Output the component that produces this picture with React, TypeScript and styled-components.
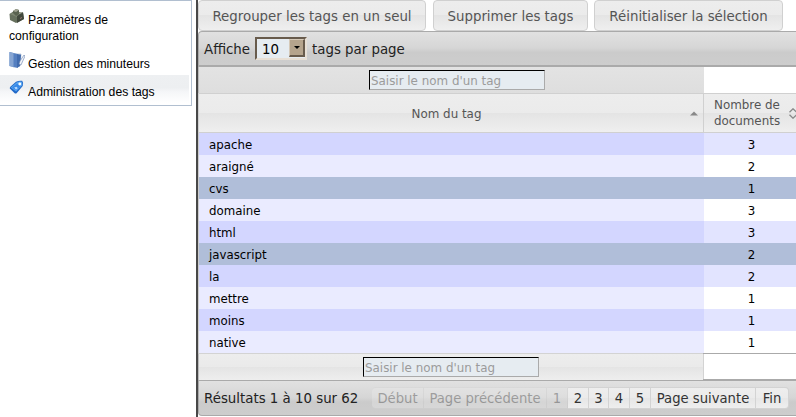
import React from "react";
import styled, { createGlobalStyle } from "styled-components";

const GlobalStyle = createGlobalStyle`
  * { box-sizing: border-box; }
  body { margin: 0; background: #fff; overflow: hidden; }
`;

const Page = styled.div`
  display: flex;
  align-items: flex-start;
  width: 796px;
  height: 417px;
  overflow: hidden;
  font-family: "DejaVu Sans", Verdana, sans-serif;
  color: #222;
`;

const Sidebar = styled.nav`
  width: 192px;
  height: 106px;
  margin-right: 4px;
  padding: 6px 2px 2px 0;
  border: 1px solid #b1bfd0;
  border-left: 0;
  flex: none;
  font: 12.2px/16px "Liberation Sans", Arial, sans-serif;
  color: #000;
`;

const MenuItem = styled.div<{ $tall?: boolean; $active?: boolean }>`
  height: ${(p) => (p.$tall ? 40 : 28)}px;
  padding: ${(p) => (p.$tall ? 3 : 7)}px 0 0 9px;
  white-space: nowrap;
  background: ${(p) => (p.$active ? "linear-gradient(#eef0f2 0, #edeff1 45%, #f5f6f8 60%, #fff 100%)" : "none")};
  svg { width: 16px; height: 16px; margin: -2px 3px 0 0; vertical-align: 0; }
`;

const Main = styled.main`
  width: 600px;
  height: 417px;
  flex: none;
  overflow: hidden;
  border-left: 2px solid #484848;
`;

const Actions = styled.div`
  display: flex;
  height: 31px;
`;

const ActionButton = styled.button<{ $width: number; $gap?: number }>`
  width: ${(p) => p.$width}px;
  height: 31px;
  margin: 0 ${(p) => p.$gap ?? 0}px 0 0;
  padding: 2px 0 0;
  flex: none;
  border: 1px solid #d0d0d0;
  border-radius: 4px;
  background: linear-gradient(#ededed 0, #ebebeb 49%, #e4e4e4 50%, #efefef 100%);
  color: #555;
  font: 13.35px/19px "DejaVu Sans", sans-serif;
  white-space: nowrap;
`;

const Bar = styled.div<{ $foot?: boolean }>`
  display: flex;
  align-items: center;
  height: 36px;
  padding-left: 5px;
  border: solid #aaa;
  border-width: ${(p) => (p.$foot ? "1px 0 1px 1px" : "1px 0 2px 1px")};
  border-radius: ${(p) => (p.$foot ? "0 0 0 4px" : "4px 0 0 0")};
  background: linear-gradient(#e1e1e1 0, #d6d6d6 48%, #cbcbcb 62%, #cdcdcd 100%);
  font-size: 13.35px;
  line-height: 18px;
  white-space: nowrap;
`;

const BarText = styled.span<{ $width: number }>`
  width: ${(p) => p.$width}px;
  padding-top: 2px;
  flex: none;
`;

const Select = styled.div`
  display: flex;
  justify-content: space-between;
  width: 52px;
  height: 23px;
  margin-right: 5px;
  padding-left: 5px;
  border: 2px solid;
  border-color: #685b4c #e7dfd5 #e7dfd5 #685b4c;
  background: #e6ecf1;
  color: #000;
  line-height: 21px;
`;

const Arrow = styled.span`
  display: flex;
  align-items: center;
  justify-content: center;
  width: 16px;
  height: 18px;
  border: 1px solid;
  border-color: #d5c9b8 #685b4c #685b4c #d5c9b8;
  border-right-width: 2px;
  border-bottom-width: 2px;
  background: #b5a48d;
`;

const Grid = styled.div<{ $height: number; $first?: number }>`
  display: grid;
  grid-template-columns: ${(p) => p.$first ?? 505}px 1fr;
  height: ${(p) => p.$height}px;
  font-size: 11.9px;
`;

const FilterCell = styled.div<{ $foot?: boolean }>`
  display: flex;
  align-items: flex-start;
  justify-content: center;
  padding: ${(p) => (p.$foot ? "3px 0 0 0" : "3px 0 0 11px")};
  border-left: 1px solid #bbb;
  border-top: ${(p) => (p.$foot ? "1px solid #d3d3d3" : "0")};
  background: ${(p) =>
    p.$foot
      ? "linear-gradient(#ededed 0, #eaeaea 49%, #e4e4e4 50%, #eeeeee 100%)"
      : "linear-gradient(#e3e3e3, #dedede)"};
`;

const EmptyCell = styled.div<{ $foot?: boolean }>`
  border: solid ${(p) => (p.$foot ? "#aaa" : "transparent")};
  border-width: ${(p) => (p.$foot ? "1px 0" : "0")};
  box-shadow: ${(p) => (p.$foot ? "inset 1px 0 #d3d3d3" : "none")};
`;

const Filter = styled.input`
  width: 176px;
  height: 20px;
  margin: 0;
  padding: 1px 1px 0;
  border: 1px solid;
  border-color: #000 #aaa #aaa #000;
  border-radius: 0;
  background: #e6ecf1;
  font: 11.9px/16px "DejaVu Sans", sans-serif;
  &::placeholder { color: #9b9b9b; opacity: 1; }
`;

const Heading = styled.div<{ $count?: boolean }>`
  display: grid;
  grid-template-columns: ${(p) => (p.$count ? "1fr 7px" : "1fr 8px")};
  align-items: center;
  padding: ${(p) => (p.$count ? "0 0 0 1px" : "1px 5px 0 4px")};
  border: solid #d0d0d0;
  border-width: 1px 0 1px 1px;
  background: linear-gradient(#ededed 0, #ebebeb 49%, #e4e4e4 50%, #efefef 100%);
  color: #555;
  text-align: center;
  line-height: 16px;
`;

const Row = styled.div<{ $tone: "odd" | "even" | "selected" }>`
  display: grid;
  grid-template-columns: 505px 95px;
  height: 22px;
  border-left: 1px solid #ccc;
  color: #000;
  font-size: 11.8px;
  line-height: 20px;
  background: ${(p) => ({ odd: "#d3d6ff", even: "#eaebff", selected: "#b0bed9" })[p.$tone]};
`;

const Name = styled.span`
  padding: 2px 0 0 10px;
`;

const Count = styled.span<{ $tone: "odd" | "even" | "selected" }>`
  padding-top: 2px;
  text-align: center;
  background: ${(p) => ({ odd: "#e2e4ff", even: "#fff", selected: "#b0bed9" })[p.$tone]};
`;

const Pager = styled.div`
  display: flex;
  height: 22px;
`;

const PageButton = styled.button<{ $width: number; $edge?: "first" | "last" }>`
  width: ${(p) => p.$width}px;
  height: 22px;
  flex: none;
  margin: 0;
  padding: 1px 0 0;
  border: 1px solid #d3d3d3;
  border-left-width: 0;
  border-radius: ${(p) => (p.$edge === "first" ? "4px 0 0 4px" : p.$edge === "last" ? "0 4px 4px 0" : "0")};
  background: linear-gradient(#eee 0, #ebebeb 49%, #e6e6e6 50%, #eee 100%);
  color: #333;
  font: 13.2px/18px "DejaVu Sans", sans-serif;
  white-space: nowrap;
  &:disabled { opacity: 0.35; }
`;

const tags: [string, number, boolean?][] = [
  ["apache", 3], ["araigné", 2], ["cvs", 1, true], ["domaine", 3], ["html", 3],
  ["javascript", 2, true], ["la", 2], ["mettre", 1], ["moins", 1], ["native", 1],
];

const pages: { label: string; width: number; disabled?: boolean; edge?: "first" | "last" }[] = [
  { label: "Début", width: 52, disabled: true, edge: "first" },
  { label: "Page précédente", width: 123, disabled: true },
  { label: "1", width: 21, disabled: true },
  { label: "2", width: 21 },
  { label: "3", width: 20 },
  { label: "4", width: 21 },
  { label: "5", width: 21 },
  { label: "Page suivante", width: 105 },
  { label: "Fin", width: 33, edge: "last" },
];

const BoxIcon = () => (
  <svg viewBox="0 0 16 16">
    <path d="M.5 6 5 3l9 2 1 6-8 4-6-3z" fill="#66705d" />
    <path d="m1 6 5-2 8 1-6 4z" fill="#7e8773" />
    <path d="m8 8 6-4 1 7-7 4z" fill="#41483c" />
    <path d="M4 5V3l3-2 3 1v4L7 8z" fill="#59624f" />
    <path d="m4 3 3-2 3 1-3 2zM10 5l3-1v1l-3 1z" fill="#a1a392" />
    <path d="m11 10 2-1v1l-2 1z" fill="#9b7470" />
  </svg>
);

const BookIcon = () => (
  <svg viewBox="0 0 16 16">
    <path d="M4 2h8l-1 12-7 1z" fill="#a9c0e1" stroke="#8199bb" strokeWidth=".5" />
    <path d="m.5 0 8 2v14l-8-2z" fill="#557fc0" />
    <path d="m.5 0 4 1v14l-4-1z" fill="#86a5d3" />
    <path d="m8 2 4 1-1 11-3 2z" fill="#416bae" />
    <path d="m10 12 1-3 4-6 1 1-4 9z" fill="#f2f4f8" stroke="#657fac" strokeWidth=".6" />
  </svg>
);

const TagIcon = () => (
  <svg viewBox="0 0 16 16">
    <path d="M.8 8.5q-.2-1.2.8-2L7 1.8Q10 .3 13.2.8q1.6 2 .5 5.2l-5.9 7q-1.2 1-2.4 0z" fill="#2269c8" />
    <path d="M1.8 7.4 7.6 2.6q3-1.6 5.2-.8 1 2 0 4L7 11.4z" fill="#58a7f3" />
    <path d="m3 7.4 5-4 4 3.2-5 4z" fill="#3889e7" />
    <circle cx="10.8" cy="4" r="1.4" fill="#fff" />
    <path d="m5.2 7.4 2.4-.6 1.2 1.4-1.8 1.6z" fill="#b3d8ff" />
  </svg>
);

export default function App() {
  return (
    <>
      <GlobalStyle />
      <Page>
        <Sidebar>
          <MenuItem $tall><BoxIcon />Paramètres de<br />configuration</MenuItem>
          <MenuItem><BookIcon />Gestion des minuteurs</MenuItem>
          <MenuItem $active><TagIcon />Administration des tags</MenuItem>
        </Sidebar>
        <Main>
          <Actions>
            <ActionButton $width={228} $gap={7}>Regrouper les tags en un seul</ActionButton>
            <ActionButton $width={155} $gap={6}>Supprimer les tags</ActionButton>
            <ActionButton $width={189}>Réinitialiser la sélection</ActionButton>
          </Actions>
          <Bar>
            <BarText $width={51}>Affiche</BarText>
            <Select>
              10
              <Arrow><svg width="6" height="3" viewBox="0 0 6 3"><path d="M0 0h6L3 3z" fill="#000" /></svg></Arrow>
            </Select>
            <BarText $width={100}>tags par page</BarText>
          </Bar>
          <Grid $height={26} $first={506}>
            <FilterCell><Filter placeholder="Saisir le nom d'un tag" /></FilterCell>
            <EmptyCell />
          </Grid>
          <Grid $height={40}>
            <Heading>
              <span>Nom du tag</span>
              <svg width="8" height="5" viewBox="0 0 8 5"><path d="M0 4.5h8L4 .5z" fill="#888" /></svg>
            </Heading>
            <Heading $count>
              <span>Nombre de<br />documents</span>
              <svg width="8" height="11" viewBox="0 0 8 11"><path d="m.5 4.2 3.5-3.4 3.5 3.4M.5 6.8 4 10.2l3.5-3.4" fill="none" stroke="#888" strokeWidth="1.3" /></svg>
            </Heading>
          </Grid>
          {tags.map(([name, count, selected], i) => {
            const tone = selected ? "selected" : i % 2 ? "even" : "odd";
            return <Row key={name} $tone={tone}><Name>{name}</Name><Count $tone={tone}>{count}</Count></Row>;
          })}
          <Grid $height={27}>
            <FilterCell $foot><Filter placeholder="Saisir le nom d'un tag" /></FilterCell>
            <EmptyCell $foot />
          </Grid>
          <Bar $foot>
            <BarText $width={168}>Résultats 1 à 10 sur 62</BarText>
            <Pager>
              {pages.map((p) => (
                <PageButton key={p.label} $width={p.width} $edge={p.edge} disabled={p.disabled}>{p.label}</PageButton>
              ))}
            </Pager>
          </Bar>
        </Main>
      </Page>
    </>
  );
}
